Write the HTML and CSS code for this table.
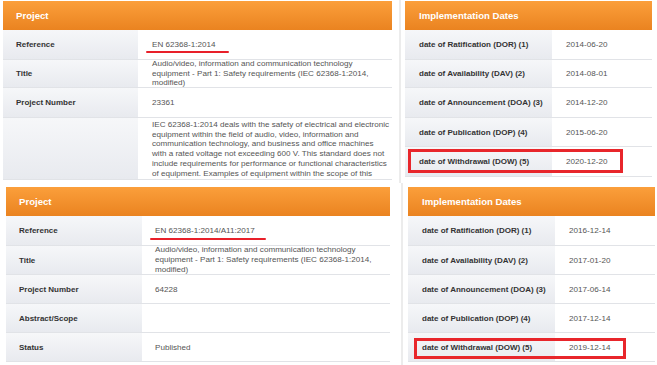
FILE: index.html
```html
<!DOCTYPE html>
<html lang="en">
<head>
<meta charset="utf-8">
<title>EN 62368-1 Project</title>
<link rel="stylesheet" href="styles.css">
</head>
<body>
<div class="shot shot-top">
  <section class="panel panel-project panel-project-top">
    <div class="panel-head">Project</div>
    <div class="row h30"><div class="label">Reference</div><div class="value"><span class="marked">EN 62368-1:2014</span></div></div>
    <div class="row h28"><div class="label">Title</div><div class="value multi">Audio/video, information and communication technology<br>equipment - Part 1: Safety requirements (IEC 62368-1:2014,<br>modified)</div></div>
    <div class="row h30"><div class="label">Project Number</div><div class="value">23361</div></div>
    <div class="row h60"><div class="label"></div><div class="value multi top">IEC 62368-1:2014 deals with the safety of electrical and electronic<br>equipment within the field of audio, video, information and<br>communication technology, and business and office machines<br>with a rated voltage not exceeding 600 V. This standard does not<br>include requirements for performance or functional characteristics<br>of equipment. Examples of equipment within the scope of this<br>standard is given in Annex A of IEC 62368-1:2014.</div></div>
  </section>
  <div class="divider"></div>
  <section class="panel panel-dates panel-dates-top">
    <div class="panel-head">Implementation Dates</div>
    <div class="row h30"><div class="label">date of Ratification (DOR) (1)</div><div class="value">2014-06-20</div></div>
    <div class="row h28"><div class="label">date of Availability (DAV) (2)</div><div class="value">2014-08-01</div></div>
    <div class="row h30"><div class="label">date of Announcement (DOA) (3)</div><div class="value">2014-12-20</div></div>
    <div class="row h29"><div class="label">date of Publication (DOP) (4)</div><div class="value">2015-06-20</div></div>
    <div class="row h30 boxed boxed-top"><div class="label">date of Withdrawal (DOW) (5)</div><div class="value">2020-12-20</div></div>
  </section>
</div>
<div class="shot shot-bottom">
  <section class="panel panel-project panel-project-bottom">
    <div class="panel-head">Project</div>
    <div class="row h30"><div class="label">Reference</div><div class="value"><span class="marked marked-long">EN 62368-1:2014/A11:2017</span></div></div>
    <div class="row h29"><div class="label">Title</div><div class="value multi">Audio/video, information and communication technology<br>equipment - Part 1: Safety requirements (IEC 62368-1:2014,<br>modified)</div></div>
    <div class="row h29"><div class="label">Project Number</div><div class="value">64228</div></div>
    <div class="row h29"><div class="label">Abstract/Scope</div><div class="value"></div></div>
    <div class="row h29"><div class="label">Status</div><div class="value">Published</div></div>
  </section>
  <div class="divider divider-bottom"></div>
  <section class="panel panel-dates">
    <div class="panel-head">Implementation Dates</div>
    <div class="row h30"><div class="label">date of Ratification (DOR) (1)</div><div class="value">2016-12-14</div></div>
    <div class="row h29"><div class="label">date of Availability (DAV) (2)</div><div class="value">2017-01-20</div></div>
    <div class="row h29"><div class="label">date of Announcement (DOA) (3)</div><div class="value">2017-06-14</div></div>
    <div class="row h29"><div class="label">date of Publication (DOP) (4)</div><div class="value">2017-12-14</div></div>
    <div class="row h29 boxed boxed-bottom"><div class="label">date of Withdrawal (DOW) (5)</div><div class="value">2019-12-14</div></div>
  </section>
</div>
</body>
</html>
```
FILE: styles.css
```css
*, *::before, *::after { box-sizing: border-box; }
html, body { margin: 0; padding: 0; background: #fff; }
body {
  width: 657px;
  height: 365px;
  overflow: hidden;
  font-family: "Liberation Sans", Arial, sans-serif;
  font-size: 8.1px;
  color: #555;
}

.shot { display: flex; align-items: flex-start; }
.shot-top { height: 183px; padding: 1px 0 0 3px; }
.shot-bottom { height: 182px; padding: 4px 0 0 6px; }

.divider {
  align-self: stretch;
  width: 2px;
  margin: -1px 4px 0 7px;
  background: #ececec;
}
.divider-bottom { margin: -4px 5px 0 11px; }

.panel { flex: none; overflow: hidden; }
.panel-project-top { width: 389px; height: 179px; }
.panel-project-bottom { width: 384px; }
.panel-dates { width: 247px; }

.panel-head {
  height: 29px;
  display: flex;
  align-items: center;
  padding: 0 13px;
  background: linear-gradient(#fb9f3b, #ea8320);
  color: #fff;
  font-weight: bold;
  font-size: 9.6px;
}
.panel-dates .panel-head { padding: 0 14px; }

.row {
  display: flex;
  position: relative;
  border-bottom: 1px solid #e1e3e7;
}
.h28 { height: 28px; }
.h29 { height: 29px; }
.h30 { height: 30px; }
.h60 { height: 62px; }

.label {
  flex: none;
  width: 135px;
  display: flex;
  align-items: center;
  padding: 0 13px;
  background: linear-gradient(#f6f7f9, #e8eaef);
  color: #333;
  font-weight: bold;
  font-size: 8px;
  white-space: nowrap;
}
.panel-project-bottom .label { width: 136px; }
.panel-dates .label { width: 147px; padding: 0 14px; }

.value {
  flex: 1;
  display: flex;
  align-items: center;
  padding: 0 0 0 14px;
  white-space: nowrap;
}
.panel-project-bottom .value { padding-left: 13px; }
.multi { line-height: 9.8px; }
.top { align-items: flex-start; padding-top: 2px; line-height: 9.7px; }

.marked { position: relative; }
.marked::after {
  content: "";
  position: absolute;
  left: -6px;
  right: -14px;
  bottom: -4px;
  height: 2px;
  border-radius: 1px;
  background: #e8202a;
}
.marked-long::after { left: -5px; right: -11px; bottom: -5px; }

.boxed::after {
  content: "";
  position: absolute;
  border: 3px solid #e8262b;
}
.boxed-top::after { left: 3px; top: 2px; width: 215px; height: 24px; }
.boxed-bottom::after { left: 6px; top: 5px; width: 212px; height: 21px; }
```
